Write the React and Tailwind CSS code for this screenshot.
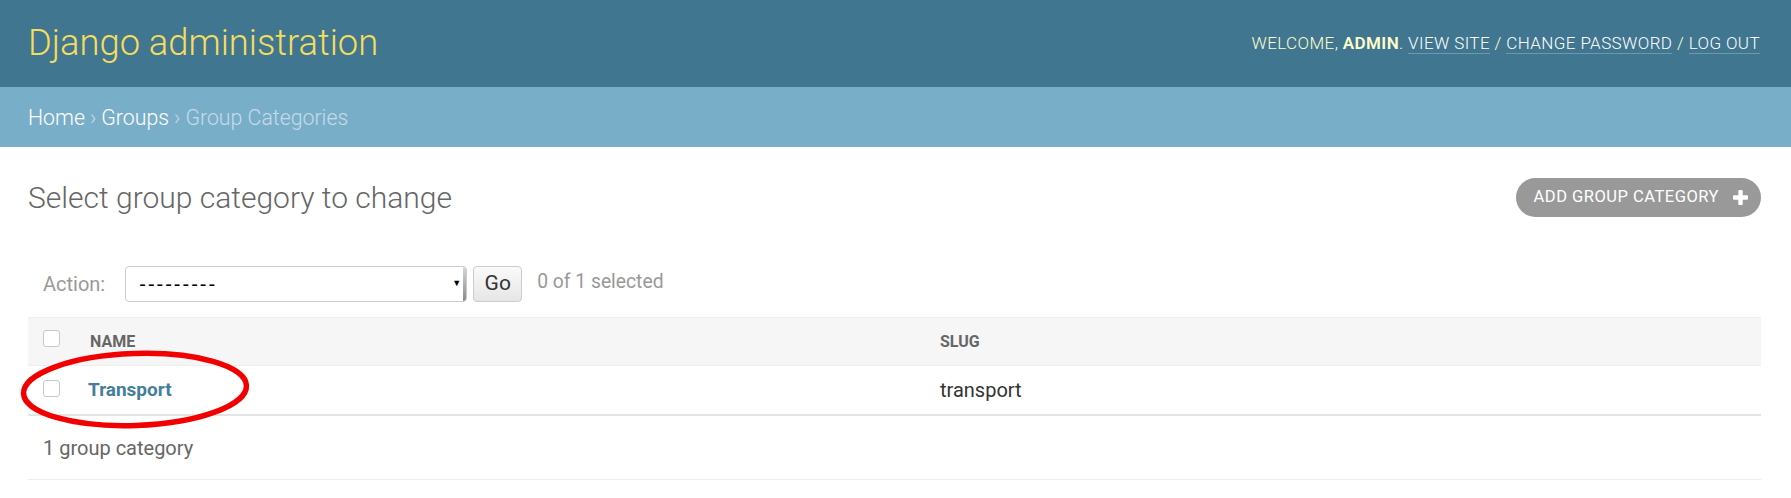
import React from "react";

const font = { fontFamily: 'Roboto, "Liberation Sans", sans-serif' };

function Header() {
  return (
    <div className="flex h-[87px] items-center justify-between bg-[#417690] pl-[28px] pr-[31px]">
      <h1 className="text-[36.3px] font-light leading-none text-[#f5dd5d]">Django administration</h1>
      <div className="text-[17px] font-light uppercase tracking-[0.4px] text-[#ffc]">
        Welcome, <strong className="font-semibold">admin</strong>.{" "}
        <a className="border-b border-white/25 text-white">View site</a> /{" "}
        <a className="border-b border-white/25 text-white">Change password</a> /{" "}
        <a className="border-b border-white/25 text-white">Log out</a>
      </div>
    </div>
  );
}

function Breadcrumbs() {
  return (
    <div className="flex h-[60px] items-center bg-[#79aec8] px-[28px] pt-[2px] text-[21.3px] font-light text-[#c4dce8]">
      <a className="text-white">Home</a>
      <span className="mx-[5px]">›</span>
      <a className="text-white">Groups</a>
      <span className="mx-[5px]">›</span>
      <span>Group Categories</span>
    </div>
  );
}

function PlusIcon() {
  return (
    <svg width="15" height="15" viewBox="0 0 15 15" className="ml-[14px]">
      <rect x="5.3" y="0" width="4.4" height="15" rx="1" fill="#fff" />
      <rect x="0" y="5.3" width="15" height="4.4" rx="1" fill="#fff" />
    </svg>
  );
}

function Checkbox() {
  return <div className="h-[17px] w-[17px] rounded-[3px] border border-[#c8c8c8] bg-white" />;
}

function ActionBar() {
  return (
    <div className="flex h-[36px] items-center">
      <span className="ml-[15px] text-[20px] text-[#999]">Action:</span>
      <div className="relative ml-[20px] flex h-[36px] w-[342px] items-center rounded-[4px] border border-[#ccc] bg-white">
        <span
          className="pl-[13px] text-[20px] tracking-[2px] text-black"
          style={{ fontFamily: '"Liberation Sans", sans-serif' }}
        >
          ---------
        </span>
        <span className="absolute right-[5px] top-[12px] text-[9px] leading-none text-black">▼</span>
        <div className="absolute right-0 top-0 h-full w-[3px] rounded-r-[3px] bg-gradient-to-b from-[#d8d8d8] to-[#8a8a8a]" />
      </div>
      <button className="ml-[6px] h-[36px] w-[49px] rounded-[4px] border border-[#ccc] bg-gradient-to-b from-[#fafafa] to-[#e6e6e6] text-[21px] text-[#333]">
        Go
      </button>
      <span className="mb-[4px] ml-[15px] text-[19.3px] text-[#999]">0 of 1 selected</span>
    </div>
  );
}

function ResultsTable() {
  return (
    <div className="mt-[15px] border-t border-[#eee]">
      <div className="grid h-[48px] grid-cols-[60px_852px_1fr] items-center border-b border-[#eee] bg-[#f6f6f6] text-[16px] font-bold uppercase text-[#666]">
        <div className="mb-[6px] pl-[15px]">
          <Checkbox />
        </div>
        <div className="pl-[2px]">Name</div>
        <div>Slug</div>
      </div>
      <div className="grid h-[50px] grid-cols-[60px_852px_1fr] items-center border-b-2 border-[#e4e4e4] text-[20px]">
        <div className="mb-[3px] pl-[15px]">
          <Checkbox />
        </div>
        <a className="text-[19px] font-bold text-[#447e9b]">Transport</a>
        <div className="text-[#333]">transport</div>
      </div>
      <div className="flex h-[64px] items-center border-b border-[#eee] pl-[15px] text-[20px] text-[#666]">
        1 group category
      </div>
    </div>
  );
}

export default function App() {
  return (
    <div className="relative h-[498px] w-[1791px] overflow-hidden bg-white" style={font}>
      <Header />
      <Breadcrumbs />
      <div className="pl-[28px] pr-[30px] pt-[31px]">
        <div className="flex h-[39px] items-center justify-between">
          <h2 className="text-[30px] font-light text-[#666]">Select group category to change</h2>
          <a className="flex h-[39px] items-center rounded-full bg-[#999] pl-[18px] pr-[13px] text-[16.5px] uppercase tracking-[0.5px] text-white">
            Add group category
            <PlusIcon />
          </a>
        </div>
        <div className="mt-[49px]">
          <ActionBar />
        </div>
        <ResultsTable />
      </div>
      <svg className="pointer-events-none absolute left-0 top-0" width="1791" height="498">
        <ellipse
          cx="135"
          cy="389.5"
          rx="111.5"
          ry="36"
          fill="none"
          stroke="#f20000"
          strokeWidth="5.5"
          transform="rotate(-2 135 389.5)"
        />
      </svg>
    </div>
  );
}
